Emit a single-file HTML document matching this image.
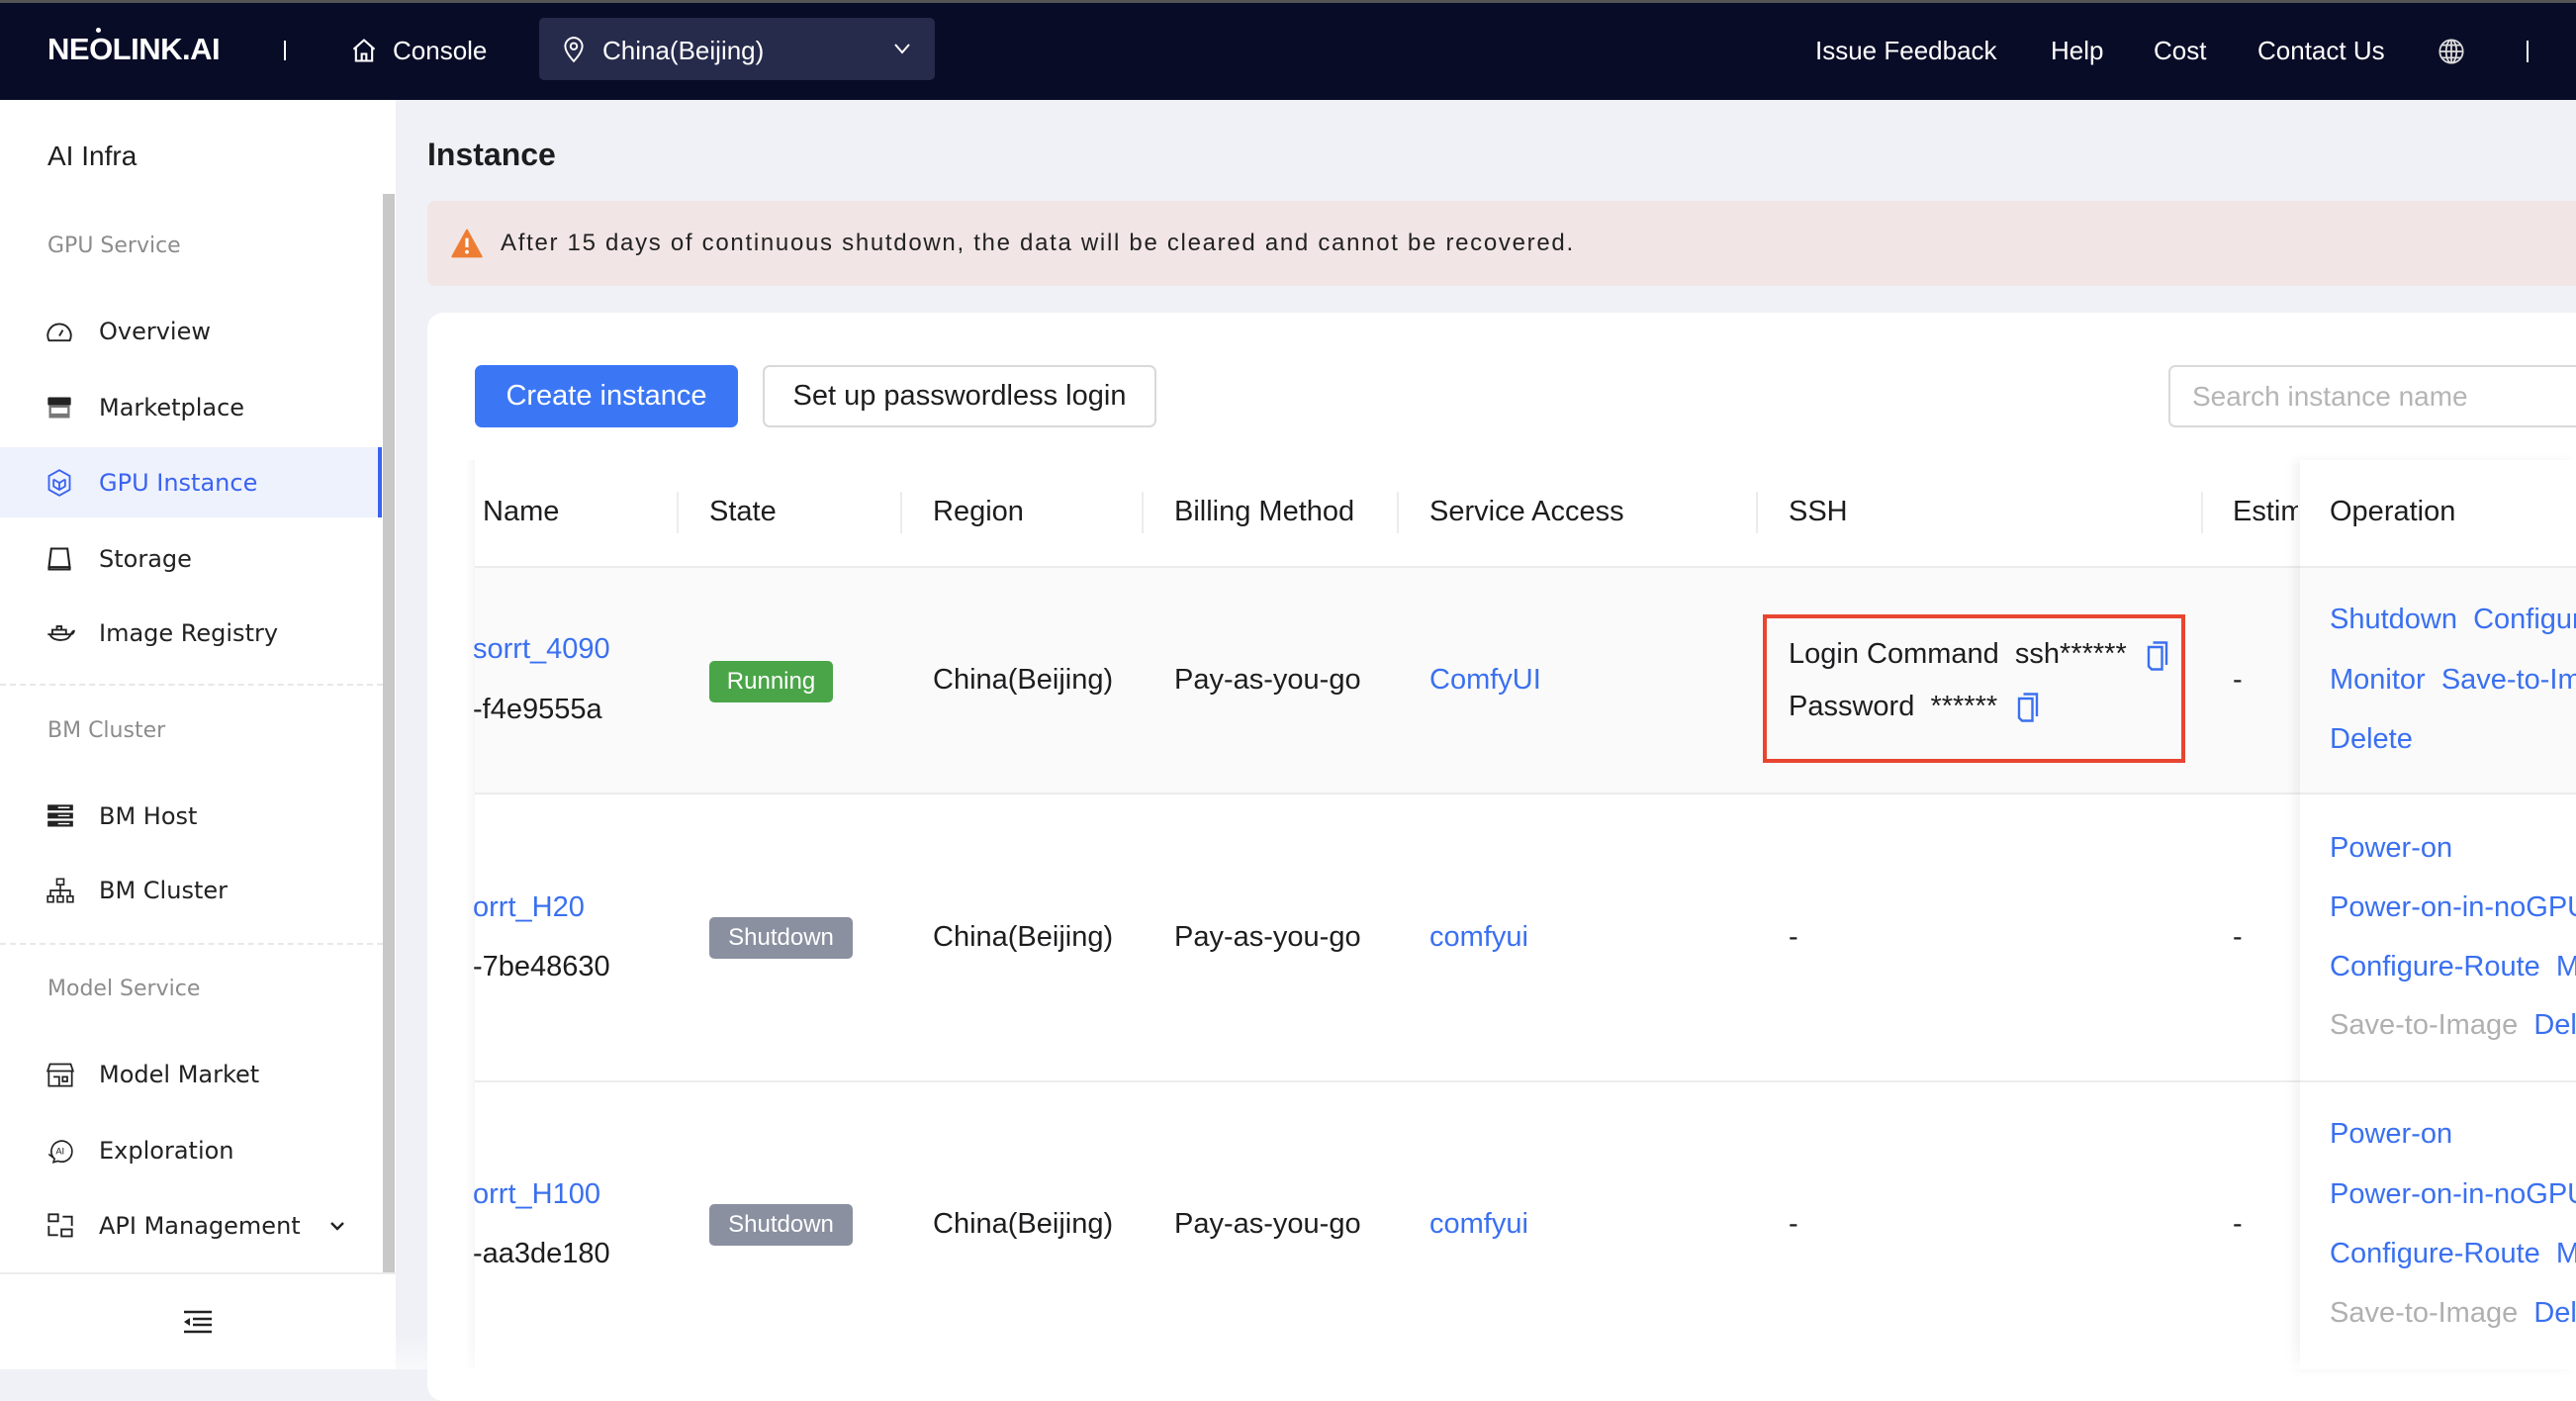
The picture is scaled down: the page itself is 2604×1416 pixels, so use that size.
<!DOCTYPE html>
<html><head><meta charset="utf-8"><style>
*{margin:0;padding:0;box-sizing:border-box}
body{width:2604px;height:1384px;overflow:hidden;background:#f0f1f6;font-family:"Liberation Sans",sans-serif;position:relative;color:#1d1d1f}
.a{position:absolute;white-space:nowrap;line-height:40px}
.hd{position:absolute;left:0;top:0;width:2604px;height:101px;background:#090c27;border-top:3px solid #555}
.nav{color:#fff;font-size:26px;top:31px}
.sb{position:absolute;left:0;top:101px;width:400px;height:1283px;background:#fff}
.si{font-family:"DejaVu Sans",sans-serif;font-size:24px;color:#222;left:100px}
.sg{font-family:"DejaVu Sans",sans-serif;font-size:22px;color:#8c8c8c;left:48px}
.ic{position:absolute;left:46px}
.t{font-size:29px;color:#1d1d1f}
.l{color:#3a70f0}
.g{color:#b0b0b0}
.tag{position:absolute;color:#fff;font-size:24px;border-radius:5px;text-align:center;line-height:42px}
.sep{position:absolute;top:497px;width:2px;height:42px;background:#ececec}
</style></head><body>
<div class="hd"></div>
<div class="a" style="left:48px;top:30px;color:#fff;font-size:31px;font-weight:bold;letter-spacing:-0.5px">NEOLINK.AI</div>
<div style="position:absolute;left:97px;top:28px;width:5px;height:5px;border-radius:50%;background:#fff"></div>
<div style="position:absolute;left:287px;top:41px;width:2px;height:20px;background:#fff"></div>
<svg style="position:absolute;left:354px;top:37px" width="28" height="28" viewBox="0 0 24 24" fill="none" stroke="#fff" stroke-width="1.8"><path d="M3 11L12 3l9 8M5 9.5V21h14V9.5M10 21v-6h4v6"/></svg>
<div class="a nav" style="left:397px">Console</div>
<div style="position:absolute;left:545px;top:18px;width:400px;height:63px;background:#262a4b;border-radius:5px"></div>
<svg style="position:absolute;left:567px;top:36px" width="26" height="28" viewBox="0 0 24 26" fill="none" stroke="#fff" stroke-width="1.8"><path d="M12 24s-8-8-8-14a8 8 0 0116 0c0 6-8 14-8 14z"/><circle cx="12" cy="10" r="3"/></svg>
<div class="a nav" style="left:609px">China(Beijing)</div>
<svg style="position:absolute;left:903px;top:42px" width="18" height="14" viewBox="0 0 18 14" fill="none" stroke="#fff" stroke-width="2"><path d="M2 3l7 8 7-8"/></svg>
<div class="a nav" style="left:1835px">Issue Feedback</div>
<div class="a nav" style="left:2073px">Help</div>
<div class="a nav" style="left:2177px">Cost</div>
<div class="a nav" style="left:2282px">Contact Us</div>
<svg style="position:absolute;left:2464px;top:38px" width="28" height="28" viewBox="0 0 24 24" fill="none" stroke="#ddd" stroke-width="1.5"><circle cx="12" cy="12" r="10"/><ellipse cx="12" cy="12" rx="4.5" ry="10"/><path d="M2 12h20M4 6.5h16M4 17.5h16M12 2v20"/></svg>
<div style="position:absolute;left:2554px;top:41px;width:2px;height:22px;background:#fff"></div>

<div class="sb"></div>
<div style="position:absolute;left:387px;top:196px;width:12px;height:1091px;background:#c8c8c8"></div>
<div class="a" style="left:48px;top:138px;font-size:28px;color:#1d1d1f">AI Infra</div>
<div class="a sg" style="top:229px">GPU Service</div>
<div style="position:absolute;left:0;top:452px;width:386px;height:71px;background:#eef2fd;border-right:4px solid #3a63f0"></div>
<div class="a si" style="top:315px">Overview</div>
<div class="a si" style="top:392px">Marketplace</div>
<div class="a si" style="top:468px;color:#3a63f0">GPU Instance</div>
<div class="a si" style="top:545px">Storage</div>
<div class="a si" style="top:620px">Image Registry</div>
<div style="position:absolute;left:0;top:691px;width:387px;border-top:2px dashed #e8e8e8"></div>
<div class="a sg" style="top:719px">BM Cluster</div>
<div class="a si" style="top:805px">BM Host</div>
<div class="a si" style="top:880px">BM Cluster</div>
<div style="position:absolute;left:0;top:953px;width:387px;border-top:2px dashed #e8e8e8"></div>
<div class="a sg" style="top:980px">Model Service</div>
<div class="a si" style="top:1066px">Model Market</div>
<div class="a si" style="top:1143px">Exploration</div>
<div class="a si" style="top:1219px">API Management</div>
<svg style="position:absolute;left:332px;top:1232px" width="18" height="14" viewBox="0 0 18 14" fill="none" stroke="#222" stroke-width="2.4"><path d="M3 4l6 6 6-6"/></svg>
<svg class="ic" style="top:322px" width="28" height="28" viewBox="0 0 24 24" fill="none" stroke="#222" stroke-width="1.6"><path d="M3 19a10 10 0 1118 0z"/><path d="M12 15l3-5"/></svg>
<svg class="ic" style="top:398px" width="28" height="28" viewBox="0 0 24 24"><rect x="2" y="3" width="20" height="7" rx="1" fill="#222"/><rect x="3" y="10" width="18" height="11" fill="#777"/><rect x="5" y="12" width="14" height="5" fill="#fff"/></svg>
<svg class="ic" style="top:474px" width="28" height="28" viewBox="0 0 24 24" fill="none" stroke="#3a63f0" stroke-width="1.6"><path d="M12 1l9 5v12l-9 5-9-5V6z"/><path d="M7 9l5 3 5-3M12 12v6M7 9v6l5 3 5-3V9"/></svg>
<svg class="ic" style="top:551px" width="28" height="28" viewBox="0 0 24 24" fill="none" stroke="#222" stroke-width="1.8"><path d="M5 3h14l2 16H3z"/><path d="M3 19v2h18v-2"/></svg>
<svg class="ic" style="top:626px" width="30" height="28" viewBox="0 0 26 24" fill="none" stroke="#222" stroke-width="1.6"><path d="M2 13h20c2 0 3-2 3-3-2 0-2 3-5 6-3 3-14 3-16-3z"/><path d="M6 13V9h12v4M10 9V6h4v3"/></svg>
<svg class="ic" style="top:811px" width="30" height="28" viewBox="0 0 24 24"><rect x="1" y="2" width="22" height="5" fill="#222"/><rect x="1" y="9" width="22" height="5" fill="#222"/><rect x="1" y="16" width="22" height="5" fill="#222"/><path d="M10 4.5h10M10 11.5h10M10 18.5h10" stroke="#fff" stroke-width="1.2"/></svg>
<svg class="ic" style="top:886px" width="30" height="28" viewBox="0 0 24 24" fill="none" stroke="#222" stroke-width="1.4"><rect x="9" y="2" width="6" height="5"/><rect x="1" y="17" width="5" height="5"/><rect x="9.5" y="17" width="5" height="5"/><rect x="18" y="17" width="5" height="5"/><path d="M12 7v5M3.5 17v-5h17v5M12 12v5"/></svg>
<svg class="ic" style="top:1072px" width="30" height="28" viewBox="0 0 24 24" fill="none" stroke="#222" stroke-width="1.5"><path d="M3 3h18l2 6H1z"/><path d="M2 9v13h20V9M6 14h5v8M14 14h4v4h-4z"/></svg>
<svg class="ic" style="top:1149px" width="30" height="28" viewBox="0 0 24 24" fill="none" stroke="#222" stroke-width="1.4"><path d="M6 18a9 9 0 1 1 4 3l-4 1 1-3-5-4z"/><text x="8" y="15" font-size="8" fill="#222" stroke="none" font-family="Liberation Sans">AI</text></svg>
<svg class="ic" style="top:1225px" width="30" height="28" viewBox="0 0 24 24" fill="none" stroke="#222" stroke-width="1.6"><rect x="2" y="2" width="8" height="6"/><rect x="13" y="15" width="9" height="6"/><path d="M2 12v8h8M14 4h8v8"/></svg>
<div style="position:absolute;left:0;top:1286px;width:400px;height:2px;background:#ececec"></div>
<svg style="position:absolute;left:185px;top:1324px" width="30" height="24" viewBox="0 0 30 24" stroke="#222" stroke-width="2.6"><path d="M1 2h28M10 9h19M10 15h19M1 22h28"/><path d="M1 12l6-4v8z" fill="#222" stroke="none"/></svg>

<div class="a" style="left:432px;top:136px;font-size:32px;font-weight:bold;color:#1d1d1f">Instance</div>
<div style="position:absolute;left:432px;top:203px;width:2180px;height:86px;background:#f1e6e5;border-radius:8px"></div>
<svg style="position:absolute;left:456px;top:231px" width="32" height="30" viewBox="0 0 24 22"><path d="M12 1L23 21H1z" fill="#ee7d33" stroke="#ee7d33" stroke-linejoin="round" stroke-width="1.5"/><path d="M12 7v7" stroke="#fff" stroke-width="2.4"/><circle cx="12" cy="17.5" r="1.4" fill="#fff"/></svg>
<div class="a" style="left:506px;top:226px;font-size:24px;color:#222;letter-spacing:1.7px">After 15 days of continuous shutdown, the data will be cleared and cannot be recovered.</div>

<div style="position:absolute;left:432px;top:316px;width:2200px;height:1100px;background:#fff;border-radius:16px"></div>
<div class="a" style="left:480px;top:369px;width:266px;height:63px;line-height:63px;background:#3b77f5;color:#fff;border-radius:7px;text-align:center;font-size:29px">Create instance</div>
<div class="a" style="left:771px;top:369px;width:398px;height:63px;line-height:59px;border:2px solid #d9d9d9;border-radius:7px;text-align:center;font-size:29px;color:#1d1d1f">Set up passwordless login</div>
<div class="a" style="left:2192px;top:369px;width:440px;height:63px;line-height:59px;border:2px solid #d9d9d9;border-radius:7px;padding-left:22px;font-size:28px;color:#b5b5b5">Search instance name</div>

<div style="position:absolute;left:480px;top:573px;width:1845px;height:229px;background:#fafafa"></div>
<div style="position:absolute;left:480px;top:572px;width:2124px;height:2px;background:#ececec"></div>
<div style="position:absolute;left:480px;top:801px;width:2124px;height:2px;background:#ececec"></div>
<div style="position:absolute;left:480px;top:1092px;width:2124px;height:2px;background:#ececec"></div>
<div style="position:absolute;left:2325px;top:465px;width:279px;height:919px;background:#fff;box-shadow:-6px 0 10px rgba(0,0,0,0.05)"></div>
<div style="position:absolute;left:2325px;top:573px;width:279px;height:229px;background:#fafafa"></div>
<div style="position:absolute;left:2325px;top:572px;width:279px;height:2px;background:#ececec"></div>
<div style="position:absolute;left:2325px;top:801px;width:279px;height:2px;background:#ececec"></div>
<div style="position:absolute;left:2325px;top:1092px;width:279px;height:2px;background:#ececec"></div>
<div style="position:absolute;left:470px;top:465px;width:10px;height:919px;background:linear-gradient(to right,rgba(0,0,0,0),rgba(0,0,0,0.04))"></div>

<div class="sep" style="left:684px"></div><div class="sep" style="left:910px"></div><div class="sep" style="left:1154px"></div><div class="sep" style="left:1412px"></div><div class="sep" style="left:1775px"></div><div class="sep" style="left:2225px"></div>
<div class="a t" style="left:488px;top:497px">Name</div>
<div class="a t" style="left:717px;top:497px">State</div>
<div class="a t" style="left:943px;top:497px">Region</div>
<div class="a t" style="left:1187px;top:497px">Billing Method</div>
<div class="a t" style="left:1445px;top:497px">Service Access</div>
<div class="a t" style="left:1808px;top:497px">SSH</div>
<div class="a t" style="left:2257px;top:497px;width:66px;overflow:hidden">Estimated</div>
<div class="a t" style="left:2355px;top:497px">Operation</div>

<div class="a t l" style="left:478px;top:636px">sorrt_4090</div>
<div class="a t" style="left:478px;top:697px">-f4e9555a</div>
<div class="tag" style="left:717px;top:668px;width:125px;background:#4aa548">Running</div>
<div class="a t" style="left:943px;top:667px">China(Beijing)</div>
<div class="a t" style="left:1187px;top:667px">Pay-as-you-go</div>
<div class="a t l" style="left:1445px;top:667px">ComfyUI</div>
<div style="position:absolute;left:1782px;top:621px;width:427px;height:150px;border:4px solid #e84530"></div>
<div class="a t" style="left:1808px;top:641px">Login Command&nbsp; ssh******</div>
<svg style="position:absolute;left:2170px;top:648px" width="22" height="30" viewBox="0 0 14 20" fill="none" stroke="#3a70f0" stroke-width="1.6"><path d="M4 1h9v15M1 4h9v15H3l-2-2z"/></svg>
<div class="a t" style="left:1808px;top:694px">Password&nbsp; ******</div>
<svg style="position:absolute;left:2039px;top:700px" width="22" height="30" viewBox="0 0 14 20" fill="none" stroke="#3a70f0" stroke-width="1.6"><path d="M4 1h9v15M1 4h9v15H3l-2-2z"/></svg>
<div class="a t" style="left:2257px;top:667px">-</div>
<div class="a t l" style="left:2355px;top:606px">Shutdown&nbsp; Configure</div>
<div class="a t l" style="left:2355px;top:667px">Monitor&nbsp; Save-to-Image</div>
<div class="a t l" style="left:2355px;top:727px">Delete</div>

<div class="a t l" style="left:478px;top:897px">orrt_H20</div>
<div class="a t" style="left:478px;top:957px">-7be48630</div>
<div class="tag" style="left:717px;top:927px;width:145px;background:#8a90a0">Shutdown</div>
<div class="a t" style="left:943px;top:927px">China(Beijing)</div>
<div class="a t" style="left:1187px;top:927px">Pay-as-you-go</div>
<div class="a t l" style="left:1445px;top:927px">comfyui</div>
<div class="a t" style="left:1808px;top:927px">-</div>
<div class="a t" style="left:2257px;top:927px">-</div>
<div class="a t l" style="left:2355px;top:837px">Power-on</div>
<div class="a t l" style="left:2355px;top:897px">Power-on-in-noGPU</div>
<div class="a t l" style="left:2355px;top:957px">Configure-Route&nbsp; Monitor</div>
<div class="a t" style="left:2355px;top:1016px"><span class="g">Save-to-Image</span>&nbsp; <span class="l">Delete</span></div>

<div class="a t l" style="left:478px;top:1187px">orrt_H100</div>
<div class="a t" style="left:478px;top:1247px">-aa3de180</div>
<div class="tag" style="left:717px;top:1217px;width:145px;background:#8a90a0">Shutdown</div>
<div class="a t" style="left:943px;top:1217px">China(Beijing)</div>
<div class="a t" style="left:1187px;top:1217px">Pay-as-you-go</div>
<div class="a t l" style="left:1445px;top:1217px">comfyui</div>
<div class="a t" style="left:1808px;top:1217px">-</div>
<div class="a t" style="left:2257px;top:1217px">-</div>
<div class="a t l" style="left:2355px;top:1126px">Power-on</div>
<div class="a t l" style="left:2355px;top:1187px">Power-on-in-noGPU</div>
<div class="a t l" style="left:2355px;top:1247px">Configure-Route&nbsp; Monitor</div>
<div class="a t" style="left:2355px;top:1307px"><span class="g">Save-to-Image</span>&nbsp; <span class="l">Delete</span></div>
<div style="position:absolute;left:0;top:1350px;width:2604px;height:34px;background:linear-gradient(rgba(255,255,255,0),rgba(255,255,255,0.6))"></div>
</body></html>
